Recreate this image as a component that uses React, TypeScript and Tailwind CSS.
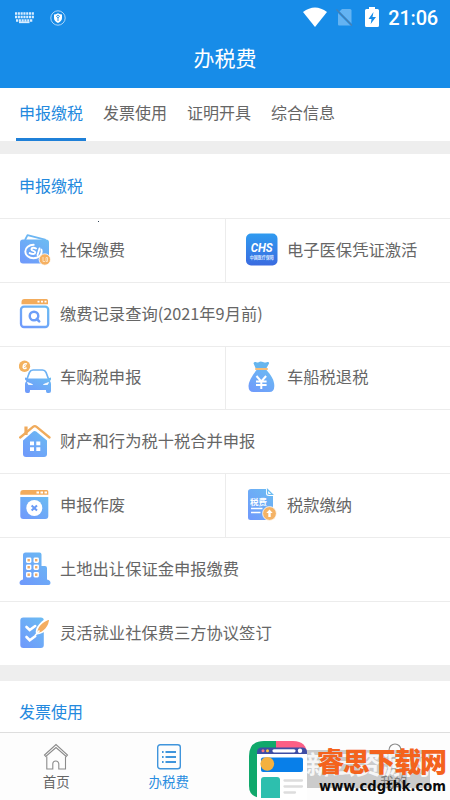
import type { ReactNode } from 'react'

const TABS = ['申报缴税', '发票使用', '证明开具', '综合信息']

function Gradients() {
  return (
    <svg width="0" height="0" className="absolute">
      <defs>
        <linearGradient id="blue" x1="1" y1="0" x2="0.2" y2="1">
          <stop offset="0" stopColor="#6bbcf2" />
          <stop offset="1" stopColor="#6f9bfb" />
        </linearGradient>
        <linearGradient id="chs" x1="0" y1="0" x2="0" y2="1">
          <stop offset="0" stopColor="#2f9bf0" />
          <stop offset="1" stopColor="#3b6be0" />
        </linearGradient>
      </defs>
    </svg>
  )
}

function Icon({ children }: { children: ReactNode }) {
  return (
    <svg width="32" height="34" viewBox="0 0 32 34" fill="none" className="shrink-0">
      {children}
    </svg>
  )
}

function WalletIcon() {
  return (
    <Icon>
      <path d="M6 7 8.500 2.200 26 6.600V10" stroke="#6cb6f3" strokeWidth="1.800" strokeLinejoin="round" />
      <rect x="1" y="6.500" width="29" height="24" rx="3" fill="url(#blue)" />
      <ellipse cx="14.500" cy="18.500" rx="8.200" ry="6.700" stroke="#fff" strokeWidth="1.900" strokeDasharray="36 8" />
      <path d="M17 15.500c-2-1.300-4.600-1-4.600.8 0 2 3.800 1.300 3.800 3.200 0 1.900-3 1.900-5.500.6M20.500 15.500l-2 6.500" stroke="#fff" strokeWidth="1.900" strokeLinecap="round" />
      <circle cx="25.800" cy="26.500" r="5.700" fill="#f5b062" stroke="#fff" strokeWidth=".8" />
      <path d="M24 24v4.500h2M27 24.500h1.500v4H27z" stroke="#fde0bb" strokeWidth="1" />
    </Icon>
  )
}

function ChsIcon() {
  return (
    <Icon>
      <rect x="0" y="0.500" width="31.500" height="32" rx="5" fill="url(#chs)" />
      <text x="15.700" y="18.500" textAnchor="middle" textLength="22" lengthAdjust="spacingAndGlyphs" fontSize="12.500" fontWeight="700" fontStyle="italic" fill="#fff" fontFamily="Roboto, sans-serif">CHS</text>
      <text x="15.700" y="26" textAnchor="middle" textLength="24" lengthAdjust="spacingAndGlyphs" fontSize="4.200" fontWeight="700" fill="#d9e9ff" fontFamily="'Noto Sans CJK SC', sans-serif">中国医疗保障</text>
    </Icon>
  )
}

function SearchIcon() {
  return (
    <Icon>
      <path d="M2.500 7.200V5a3 3 0 0 1 3-3h22a1.500 1.500 0 0 1 1.500 1.500v3.700z" fill="#f3ac5c" />
      <path d="M18.500 4.600h2M22 4.600h2M25.500 4.600h2" stroke="#fff" strokeWidth="1.600" />
      <rect x="2" y="9.600" width="27.200" height="20.400" rx="3" stroke="url(#blue)" strokeWidth="2.300" />
      <circle cx="15" cy="19" r="4.300" stroke="#6c9ef8" strokeWidth="2.400" />
      <path d="m17.800 22 2.400 2.400" stroke="#6c9ef8" strokeWidth="2.600" strokeLinecap="round" />
    </Icon>
  )
}

function CarIcon() {
  return (
    <Icon>
      <circle cx="5.500" cy="6.300" r="5.700" fill="#f3b25f" />
      <path d="M8 4C5 3 3.500 5.500 4.500 8q1.500 1.500 3-.5M3.500 7.500l3.500-2" stroke="#fff" strokeWidth="1.400" />
      <path d="M8 19 10.500 12.300Q11.500 10 14 10h9.500q2.500 0 3.500 2.300L29.500 19" stroke="#6db2f4" strokeWidth="1.700" />
      <path d="M6 17.500l3.500 1h19l3.500-1v2l-1 1.500q1 1.500 1 3V31q0 2-2 2h-1.500q-1.500 0-1.500-2v-1H11v1q0 2-1.500 2H8q-2 0-2-2v-7q0-1.500 1.500-3L6 19.500z" fill="url(#blue)" />
      <path d="m8.500 22.500 5 2h-4zM29.500 22.500l-5 2h4z" fill="#fff" stroke="#fff" strokeWidth=".8" />
    </Icon>
  )
}

function MoneyBagIcon() {
  return (
    <Icon>
      <path d="M9.500 8 7.500 3.300Q8 1.500 10 2q1.500 1 3 0t4 0 4 0q2.500-.5 2 1.500L20.500 8z" fill="#66b5ee" />
      <path d="M10.500 10h10C25 15 28.300 20 28.300 26q0 6-5 6H7.500q-5 0-5-6 0-6 8-16z" fill="url(#blue)" />
      <path d="M10 9h11" stroke="#f5bd79" strokeWidth="2" strokeLinecap="round" />
      <path d="m10.500 16 4.800 5.500 4.800-5.500M10 21.500h10.600M10 25h10.600M15.300 21v8" stroke="#fff" strokeWidth="2" />
    </Icon>
  )
}

function HouseIcon() {
  return (
    <Icon>
      <path d="M7 11V2.500" stroke="#f0ab5c" strokeWidth="3.200" />
      <path d="M1.200 13.500 14 2.800q1.800-1.400 3.600 0L30.500 13.500" stroke="#f0ab5c" strokeWidth="2.300" strokeLinecap="round" />
      <path d="M4 16.500 14.200 7.500q1.500-1.200 3 0L28 16.500V30q0 3-3 3H7q-3 0-3-3z" fill="url(#blue)" />
      <path d="M11 17.500h4v3.700h-4zM17.300 17.500h4v3.700h-4zM11 23.300h4V27h-4zM17.300 23.300h4V27h-4z" fill="#fff" />
    </Icon>
  )
}

function VoidIcon() {
  return (
    <Icon>
      <path d="M1.300 6.800V5A3 3 0 0 1 4.300 2h23.500a1.500 1.500 0 0 1 1.500 1.500v3.300z" fill="#f3ac5c" />
      <path d="M17.500 4.500h2.500M21.500 4.500H24M25.500 4.500H28" stroke="#fff" strokeWidth="2" />
      <path d="M1.300 9h28v19q0 3-3 3h-22q-3 0-3-3z" fill="url(#blue)" />
      <circle cx="15.300" cy="20" r="8" fill="#fff" />
      <path d="m12.600 17.500 5.400 5M18 17.500l-5.400 5" stroke="#6a9bf6" strokeWidth="2" />
    </Icon>
  )
}

function PayIcon() {
  return (
    <Icon>
      <path d="M5 1h15v4.500Q20 8 23 8h4v20q0 4-3 4H4.500Q2 32 2 29.500v-26Q2 1 5 1z" fill="url(#blue)" />
      <path d="M21.500 1.500v3.500q0 1.500 1.500 1.500h3.500z" stroke="#6bbcf2" strokeWidth="1.200" />
      <text x="4" y="16.500" fontSize="8.500" fontWeight="700" fill="#fff" fontFamily="'Noto Sans CJK SC', sans-serif">税费</text>
      <path d="M5 20.500H16.500M5 24.500H14.500" stroke="#fff" strokeWidth="1.500" />
      <circle cx="23.500" cy="25.500" r="6.900" fill="#f4b366" stroke="#fff" strokeWidth=".8" />
      <path d="M23.500 21.500 20.300 25h2v4h2.400v-4h2z" fill="#fff" />
    </Icon>
  )
}

const WINDOWS = [[7, 5.5], [14.5, 5.5], [7, 12.5], [14.5, 12.5], [7, 20], [14.5, 20]]

function BuildingIcon() {
  return (
    <Icon>
      <path d="M6.500.5h14q2 0 2 2v11.500h3.500q2 0 2 2v11.500q3.500.5 3.500 3.500 0 2-2 2H2.500q-2 0-2-2 0-3 3.500-3.500V3Q4 .5 6.500.5z" fill="url(#blue)" />
      {WINDOWS.map(([x, y]) => (
        <g key={`${x}-${y}`}>
          <rect x={x} y={y} width="5.400" height="5.400" rx="1.300" fill="#fff" />
          <rect x={x + 1.5} y={y + 1.5} width="2.400" height="2.400" fill="#efaa66" />
        </g>
      ))}
    </Icon>
  )
}

function SignIcon() {
  return (
    <Icon>
      <rect x="1.300" y="1.500" width="23.500" height="30.500" rx="3" fill="url(#blue)" />
      <path d="m7.500 11 3.200 3 5.500-4M7.500 21l3.200 3.200 5.500-4" stroke="#fff" strokeWidth="2.600" strokeLinecap="round" />
      <path d="M18 17.500q-1.500-4 3-9t10-6q0 6-4 10.500t-9 4.500z" fill="#f4ad60" stroke="#fff" strokeWidth="1.800" />
      <path d="m16 19.500 4.500-5" stroke="#fff" strokeWidth="1.500" />
    </Icon>
  )
}

function Cell({ icon, label, divider, right }: { icon: ReactNode; label: string; divider?: boolean; right?: boolean }) {
  return (
    <div className={`flex items-center pb-[2px] ${right ? 'flex-1 pl-5' : 'pl-[19px]'} ${divider ? 'w-[226px] border-r border-[#ececec]' : ''}`}>
      {icon}
      <span className="mb-px ml-[9px] whitespace-nowrap">{label}</span>
    </div>
  )
}

function Row({ children, short }: { children: ReactNode; short?: boolean }) {
  return (
    <div className={`flex border-t border-[#ececec] text-[16.3px] text-[#666] ${short ? 'h-[63px]' : 'h-16'}`}>
      {children}
    </div>
  )
}

function StatusBar() {
  return (
    <div className="flex h-9 items-center pl-[15px] pr-3">
      <svg width="20" height="12" viewBox="0 0 20 12" className="mt-[-1px]">
        <path d="M0 1.500h19M0 5h19M1 8.500h17" stroke="#d9edff" strokeWidth="2.400" strokeDasharray="2.100 .7" />
        <path d="M4 10.300h10.500" stroke="#d9edff" strokeWidth="1.700" />
      </svg>
      <svg width="16" height="16" viewBox="0 0 16 16" fill="none" className="ml-[14.5px] mt-[-1px]">
        <circle cx="8" cy="8" r="7.200" stroke="#a9d4f8" strokeWidth="1" />
        <path d="M8 3.300q2 1.200 4 1.200v3.500q0 3-4 5-4-2-4-5V4.500q2 0 4-1.200z" fill="#fff" />
        <path d="M8 8v3M6.500 6.200 8 8l1.500-1.800L8 5z" stroke="#178ce8" strokeWidth=".9" />
      </svg>
      <div className="flex-1" />
      <svg width="24" height="20" viewBox="0 0 24 20" className="mt-[-3px]">
        <path d="M0 5Q12-4 24 5L12 20z" fill="#fff" />
      </svg>
      <svg width="17" height="19" viewBox="0 0 17 19" className="ml-[9px] mt-[-2px]">
        <path d="M6 1h8q1.500 0 1.500 1.500v15H3q-1 0-1-1V5z" fill="#64b3f2" />
        <path d="m.5 2 16 16" stroke="#178ce8" strokeWidth="2.200" />
        <path d="m.5 1.500 15.500 16" stroke="#4a7fb0" strokeWidth="1.200" />
      </svg>
      <svg width="14" height="22" viewBox="0 0 14 22" className="ml-3 mt-[-2px]">
        <path d="M4 1h6v2h2.500q1.500 0 1.500 1.500v15q0 1.500-1.500 1.500h-11Q0 21 0 19.500v-15Q0 3 1.500 3H4z" fill="#fff" />
        <path d="M8.500 6 3.500 13h3l-.8 5L11 11H7.500z" fill="#178ce8" />
      </svg>
      <span className="ml-[9px] font-[Roboto,sans-serif] text-[20px] font-medium leading-none tracking-[-0.2px]">21:06</span>
    </div>
  )
}

function NavItem({ icon, label, active }: { icon: ReactNode; label: string; active?: boolean }) {
  return (
    <div className={`flex flex-1 flex-col items-center pt-[10px] text-[13.5px] leading-[20px] ${active ? 'text-[#2a8de0]' : 'text-[#666]'}`}>
      {icon}
      <span className="mt-px">{label}</span>
    </div>
  )
}

function BottomNav() {
  return (
    <nav className="flex h-[68px] border-t border-[#dedede] bg-[#fdfdfd]">
      <NavItem
        label="首页"
        icon={
          <svg width="26" height="27" viewBox="0 0 26 27" fill="none" stroke="#8b8b8b" strokeWidth="1.100">
            <path d="M1.500 12 13 1.500 24.500 12l-1.300 1.500L13 4.500 2.800 13.500z" />
            <path d="M3.800 13.500V26h6v-5a3 3 0 0 1 6 0v5h6.700V13.500" />
          </svg>
        }
      />
      <NavItem
        active
        label="办税费"
        icon={
          <svg width="26" height="27" viewBox="0 0 26 27" fill="none" stroke="#4095dc">
            <rect x="1.700" y="1.700" width="22.600" height="24" rx="2.500" strokeWidth="1.400" />
            <path d="M9.500 9h10.500M9.500 14h10.500M9.500 19h10.500" strokeWidth="1.800" />
            <path d="M6 9h1.600M6 14h1.600M6 19h1.600" strokeWidth="1.800" />
          </svg>
        }
      />
      <div className="flex-1" />
      <NavItem
        label="我的"
        icon={
          <svg width="26" height="27" viewBox="0 0 26 27" fill="none" stroke="#8b8b8b" strokeWidth="1.100">
            <circle cx="14" cy="7" r="6" />
            <path d="M2 26q0-11 11-11t11 11z" />
          </svg>
        }
      />
    </nav>
  )
}

function SiteBadge() {
  return (
    <svg width="205" height="62" viewBox="0 0 205 62" className="absolute bottom-0 right-0">
      <rect x="62" y="12" width="123" height="38" fill="#999" fillOpacity=".5" />
      <text x="61" y="36" textLength="124" fontSize="25" fontWeight="700" fill="#fff" fillOpacity=".85" fontFamily="'Noto Sans CJK SC', sans-serif">新云资源网</text>
      <clipPath id="logo">
        <path d="M4 18Q4 3 19 3h29q14 0 14 14v43H16Q4 59 4 48z" />
      </clipPath>
      <g clipPath="url(#logo)">
        <path d="M4 3h27v59H4z" fill="#10a86b" />
        <path d="M31 3h32v24H31z" fill="#fb5f86" />
      </g>
      <path d="M12 15h50v47H12z" fill="#fff" />
      <path d="M12 16v-2q0-4.500 5-4.500h40q5 0 5 4.500v2z" fill="#3d4da5" />
      <circle cx="18" cy="12.800" r="1.500" fill="#f67787" />
      <circle cx="22.500" cy="12.800" r="1.500" fill="#ffc441" />
      <path d="M29 12.800h20" stroke="#fff" strokeWidth="3.200" strokeLinecap="round" />
      <circle cx="55" cy="12.800" r="2.200" fill="#fff" />
      <rect x="16" y="19.500" width="42" height="14.500" rx="2" fill="#087fe9" />
      <circle cx="22.300" cy="25.800" r="6.900" fill="#f4b13f" />
      <path d="M16 42q0-3 3-3h13q3 0 3 3v18H16z" fill="#2dbfae" />
      <path d="M39.500 42.500H57M39.500 48.500H57M39.500 54.500H50" stroke="#ddd" strokeWidth="2.300" strokeLinecap="round" />
      <text x="72" y="33.500" textLength="130" fontSize="27" fontWeight="900" fill="#f4631d" fontFamily="'Noto Sans CJK SC', sans-serif">睿思下载网</text>
      <text x="74" y="52.500" textLength="127" lengthAdjust="spacingAndGlyphs" fontSize="14" fontWeight="700" fill="#0c0c0c" fontFamily="'DejaVu Sans', sans-serif">www.cdgthk.com</text>
    </svg>
  )
}

export default function App() {
  return (
    <div className="relative flex h-[800px] w-[450px] flex-col overflow-hidden bg-white font-['Noto_Sans_CJK_SC',sans-serif]">
      <Gradients />
      <header className="h-[88px] shrink-0 bg-[#178ce8] text-white">
        <StatusBar />
        <h1 className="mt-[5px] text-center text-[21px] leading-[32px]">办税费</h1>
      </header>

      <div className="flex h-[53px] shrink-0 gap-[14px] pl-4 text-base text-[#666]">
        {TABS.map((tab, i) => (
          <div
            key={tab}
            className={`flex w-[70px] justify-center border-b-[3px] pt-3 leading-6 ${i === 0 ? 'border-[#1f80d8] text-[#2389de]' : 'border-transparent'}`}
          >
            {tab}
          </div>
        ))}
      </div>

      <main className="flex-1 overflow-hidden">
        <div className="h-[13px] bg-[#eee]" />
        <h2 className="flex h-16 items-center pb-[2px] pl-[19px] text-base text-[#2389de]">申报缴税</h2>
        <Row>
          <Cell divider icon={<WalletIcon />} label="社保缴费" />
          <Cell right icon={<ChsIcon />} label="电子医保凭证激活" />
        </Row>
        <Row>
          <Cell icon={<SearchIcon />} label="缴费记录查询(2021年9月前)" />
        </Row>
        <Row short>
          <Cell divider icon={<CarIcon />} label="车购税申报" />
          <Cell right icon={<MoneyBagIcon />} label="车船税退税" />
        </Row>
        <Row>
          <Cell icon={<HouseIcon />} label="财产和行为税十税合并申报" />
        </Row>
        <Row>
          <Cell divider icon={<VoidIcon />} label="申报作废" />
          <Cell right icon={<PayIcon />} label="税款缴纳" />
        </Row>
        <Row>
          <Cell icon={<BuildingIcon />} label="土地出让保证金申报缴费" />
        </Row>
        <Row>
          <Cell icon={<SignIcon />} label="灵活就业社保费三方协议签订" />
        </Row>
        <div className="h-4 bg-[#eee]" />
        <h2 className="flex h-[60px] items-center pl-[19px] text-base text-[#2389de]">发票使用</h2>
      </main>

      <BottomNav />
      <SiteBadge />
      <span className="absolute left-[98px] top-[221px] size-px bg-[#345]" />
    </div>
  )
}
